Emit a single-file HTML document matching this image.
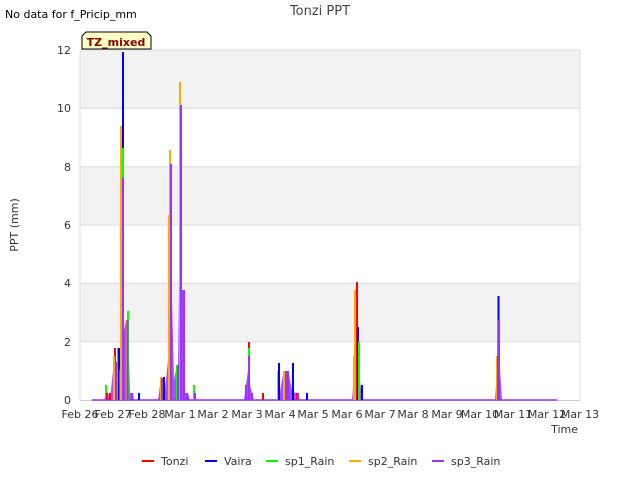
<!DOCTYPE html>
<html><head><meta charset="utf-8"><style>
body{margin:0;background:#fff;}
svg{display:block;font-family:"DejaVu Sans","Liberation Sans",sans-serif;}
</style></head><body>
<svg width="640" height="480" viewBox="0 0 640 480" xmlns="http://www.w3.org/2000/svg">
<rect width="640" height="480" fill="#fff"/>
<rect x="80" y="50" width="500" height="350" fill="#fff"/>
<rect x="80" y="50" width="500" height="58.3" fill="#f2f2f2"/>
<rect x="80" y="166.7" width="500" height="58.3" fill="#f2f2f2"/>
<rect x="80" y="283.3" width="500" height="58.3" fill="#f2f2f2"/>
<g stroke="#dcdcdc" stroke-width="1">
<line x1="80" y1="50" x2="580" y2="50"/><line x1="80" y1="108.3" x2="580" y2="108.3"/>
<line x1="80" y1="166.7" x2="580" y2="166.7"/><line x1="80" y1="225" x2="580" y2="225"/>
<line x1="80" y1="283.3" x2="580" y2="283.3"/><line x1="80" y1="341.7" x2="580" y2="341.7"/>
<line x1="80" y1="50" x2="80" y2="400"/><line x1="580" y1="50" x2="580" y2="400"/>
</g>
<line x1="80" y1="400.5" x2="580" y2="400.5" stroke="#ccc"/>
<g font-size="11" fill="#333" text-anchor="end">
<text x="71" y="404">0</text><text x="71" y="346">2</text><text x="71" y="287">4</text>
<text x="71" y="229">6</text><text x="71" y="171">8</text><text x="71" y="112">10</text><text x="71" y="54">12</text>
</g>
<g font-size="11" fill="#333" text-anchor="middle">
<text x="80" y="418">Feb 26</text><text x="113" y="418">Feb 27</text><text x="147" y="418">Feb 28</text>
<text x="180" y="418">Mar 1</text><text x="213" y="418">Mar 2</text><text x="247" y="418">Mar 3</text>
<text x="280" y="418">Mar 4</text><text x="313" y="418">Mar 5</text><text x="347" y="418">Mar 6</text>
<text x="380" y="418">Mar 7</text><text x="413" y="418">Mar 8</text><text x="447" y="418">Mar 9</text>
<text x="480" y="418">Mar 10</text><text x="513" y="418">Mar 11</text><text x="547" y="418">Mar 12</text>
<text x="580" y="418">Mar 13</text>
</g>
<text x="578" y="433" font-size="11" fill="#333" text-anchor="end">Time</text>
<text x="18" y="225" font-size="11" fill="#333" text-anchor="middle" transform="rotate(-90 18 225)">PPT (mm)</text>
<text x="320" y="15" font-size="13" fill="#444" text-anchor="middle">Tonzi PPT</text>
<text x="5" y="18" font-size="11" fill="#000">No data for f_Pricip_mm</text>
<line x1="92" y1="400" x2="557" y2="400" stroke="#9b30ff" stroke-width="1.5"/>
<g fill="#9b30ff" opacity="0.85">
<polygon points="104,400 106,393 108,393 110,400 113,370 116,362 118,385 120,370 122,178 124,330 126,320 128,320 130,393 133,393 134,400"/>
<polygon points="158,400 160,385 162,378 165,390 168,360 170,270 171,164 172,300 174,380 176,370 178,365 180,200 181,105 182,290 184,290 185,393 188,393 190,400"/>
<polygon points="244,400 246,385 248,370 249,356 250,385 252,393 254,400"/>
<polygon points="279,400 281,385 283,375 285,371 288,371 290,380 292,390 295,393 298,393 300,400"/>
<polygon points="352,400 355,360 357,300 358,327 360,380 362,400"/>
<polygon points="495,400 497,370 499,320 500,370 502,400"/>
</g>
<g stroke-width="2" fill="none">
<line x1="106" y1="400" x2="106" y2="385" stroke="#0f0"/>
<line x1="107" y1="400" x2="107" y2="393" stroke="#f00"/>
<line x1="110" y1="400" x2="110" y2="393" stroke="#f00"/>
<line x1="115" y1="400" x2="115" y2="348" stroke="#f00"/>
<line x1="114" y1="400" x2="114" y2="356" stroke="#fa0"/>
<line x1="116" y1="400" x2="116" y2="362" stroke="#9b30ff"/>
<line x1="118" y1="400" x2="118" y2="348" stroke="#0f0"/>
<line x1="119" y1="400" x2="119" y2="348" stroke="#00f"/>
<line x1="120" y1="400" x2="120" y2="370" stroke="#9b30ff"/>
<line x1="121" y1="400" x2="121" y2="126" stroke="#fa0"/>
<line x1="123" y1="400" x2="123" y2="52" stroke="#00f"/>
<line x1="123" y1="400" x2="123" y2="148" stroke="#0f0"/>
<line x1="123" y1="400" x2="123" y2="178" stroke="#9b30ff"/>
<line x1="127" y1="400" x2="127" y2="320" stroke="#fa0"/>
<line x1="128" y1="400" x2="128" y2="311" stroke="#0f0"/>
<line x1="127.5" y1="400" x2="127.5" y2="320" stroke="#9b30ff"/>
<line x1="132" y1="400" x2="132" y2="393" stroke="#9b30ff"/>
<line x1="139" y1="400" x2="139" y2="393" stroke="#00f"/>
<line x1="161" y1="400" x2="161" y2="377" stroke="#fa0"/>
<line x1="162" y1="400" x2="162" y2="378" stroke="#9b30ff"/>
<line x1="164" y1="400" x2="164" y2="377" stroke="#00f"/>
<line x1="169" y1="400" x2="169" y2="215" stroke="#fa0"/>
<line x1="170" y1="400" x2="170" y2="150" stroke="#fa0"/>
<line x1="171" y1="400" x2="171" y2="164" stroke="#9b30ff"/>
<line x1="177" y1="400" x2="177" y2="365" stroke="#0f0"/>
<line x1="178" y1="400" x2="178" y2="365" stroke="#9b30ff"/>
<line x1="180" y1="400" x2="180" y2="82" stroke="#fa0"/>
<line x1="181" y1="400" x2="181" y2="105" stroke="#9b30ff"/>
<line x1="184" y1="400" x2="184" y2="290" stroke="#9b30ff"/>
<line x1="187" y1="400" x2="187" y2="393" stroke="#9b30ff"/>
<line x1="194" y1="400" x2="194" y2="385" stroke="#0f0"/>
<line x1="195" y1="400" x2="195" y2="393" stroke="#9b30ff"/>
<line x1="246" y1="400" x2="246" y2="385" stroke="#9b30ff"/>
<line x1="249" y1="400" x2="249" y2="342" stroke="#f00"/>
<line x1="249" y1="400" x2="249" y2="348" stroke="#0f0"/>
<line x1="249" y1="400" x2="249" y2="356" stroke="#9b30ff"/>
<line x1="252" y1="400" x2="252" y2="393" stroke="#9b30ff"/>
<line x1="263" y1="400" x2="263" y2="393" stroke="#f00"/>
<line x1="278" y1="400" x2="278" y2="371" stroke="#fa0"/>
<line x1="279" y1="400" x2="279" y2="363" stroke="#00f"/>
<line x1="284" y1="400" x2="284" y2="371" stroke="#fa0"/>
<line x1="286" y1="400" x2="286" y2="371" stroke="#9b30ff"/>
<line x1="288" y1="400" x2="288" y2="371" stroke="#9b30ff"/>
<line x1="293" y1="400" x2="293" y2="363" stroke="#00f"/>
<line x1="297" y1="400" x2="297" y2="393" stroke="#f00"/>
<line x1="298" y1="400" x2="298" y2="393" stroke="#9b30ff"/>
<line x1="307" y1="400" x2="307" y2="393" stroke="#00f"/>
<line x1="354" y1="400" x2="354" y2="356" stroke="#fa0"/>
<line x1="355" y1="400" x2="355" y2="290" stroke="#fa0"/>
<line x1="357" y1="400" x2="357" y2="282" stroke="#f00"/>
<line x1="358" y1="400" x2="358" y2="327" stroke="#00f"/>
<line x1="359" y1="400" x2="359" y2="342" stroke="#0f0"/>
<line x1="362" y1="400" x2="362" y2="385" stroke="#00f"/>
<line x1="497" y1="400" x2="497" y2="356" stroke="#fa0"/>
<line x1="498.5" y1="400" x2="498.5" y2="296" stroke="#00f"/>
<line x1="499" y1="400" x2="499" y2="320" stroke="#9b30ff"/>
</g>
<path d="M82,49 L82,36 L86,32 L147,32 L151,36 L151,49 Z" fill="#ffffc8" stroke="#000" stroke-width="1"/>
<text x="116" y="46" font-size="11" font-weight="bold" fill="#8b0000" text-anchor="middle">TZ_mixed</text>
<g font-size="11" fill="#333">
<line x1="142" y1="461" x2="154" y2="461" stroke="#f00" stroke-width="2"/><text x="161" y="465">Tonzi</text>
<line x1="205" y1="461" x2="217" y2="461" stroke="#00f" stroke-width="2"/><text x="224" y="465">Vaira</text>
<line x1="266" y1="461" x2="278" y2="461" stroke="#0f0" stroke-width="2"/><text x="285" y="465">sp1_Rain</text>
<line x1="349" y1="461" x2="361" y2="461" stroke="#fa0" stroke-width="2"/><text x="368" y="465">sp2_Rain</text>
<line x1="432" y1="461" x2="444" y2="461" stroke="#9b30ff" stroke-width="2"/><text x="451" y="465">sp3_Rain</text>
</g>
</svg>
</body></html>
